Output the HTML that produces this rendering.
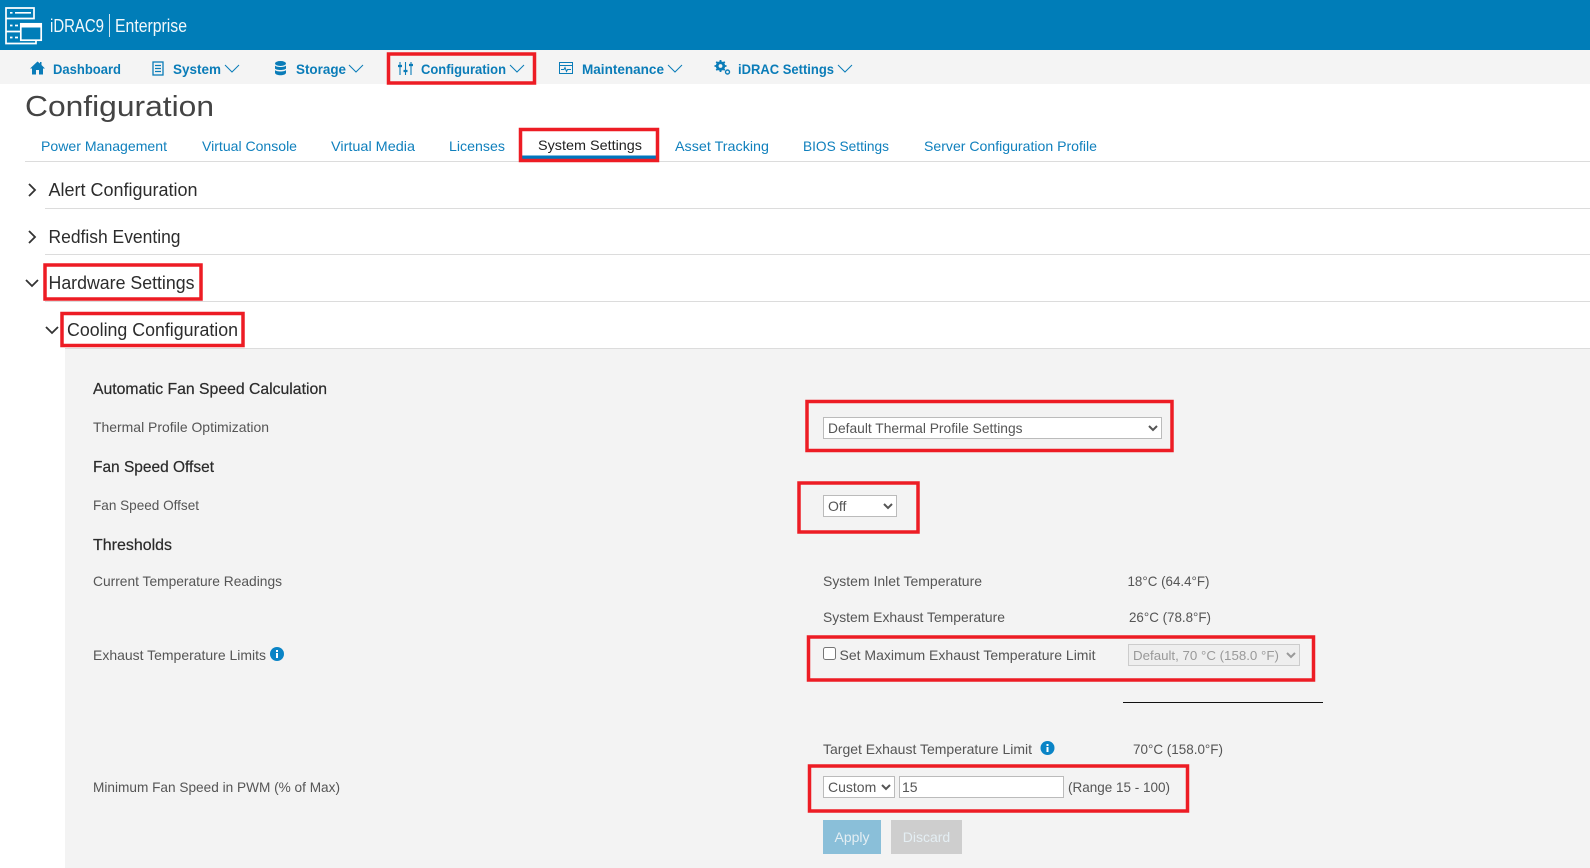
<!DOCTYPE html>
<html lang="en">
<head>
<meta charset="utf-8">
<title>iDRAC9 Enterprise - Configuration</title>
<style>
html,body{margin:0;padding:0;background:#fff;}
body{position:relative;width:1590px;height:868px;overflow:hidden;font-family:"Liberation Sans",sans-serif;}
.abs{position:absolute;box-sizing:border-box;}
#top{left:0;top:0;width:1590px;height:50px;background:#007db8;}
#nav{left:0;top:50px;width:1590px;height:34px;background:#f4f4f4;}
#panel{left:65px;top:349px;width:1525px;height:519px;background:#f3f3f3;}
select,input{position:absolute;box-sizing:border-box;font-family:"Liberation Sans",sans-serif;font-size:14px;color:#555;background:#fff;border:1px solid #bbb;border-radius:0;margin:0;outline:none;}
select{padding:0;}
select:disabled{color:#999;background:#eee;border-color:#ccc;opacity:1;}
input[type=text]{padding:0 2px;}
input[type=checkbox]{width:13px;height:13px;}
button{position:absolute;box-sizing:border-box;border:0;margin:0;padding:0;font-family:"Liberation Sans",sans-serif;font-size:14px;color:#e4eef3;}
svg{position:absolute;left:0;top:0;}
text{font-family:"Liberation Sans",sans-serif;}
.n{font-size:14px;font-weight:700;fill:#0a7cb8;}
.t{font-size:14px;fill:#1080bd;}
.h{font-size:18px;fill:#2c2c2c;}
.s{font-size:16px;fill:#2a2a2a;stroke:#2a2a2a;stroke-width:.2;}
.b{font-size:14px;fill:#555;}
.r{fill:none;stroke:#ed1c24;stroke-width:3.5;}
.c{fill:none;stroke:#0a7cb8;stroke-width:1;}
.a{fill:none;stroke:#333;stroke-width:1.8;}
</style>
</head>
<body>
<div class="abs" id="top"></div>
<div class="abs" id="nav"></div>
<div class="abs" id="panel"></div>

<select style="left:823px;top:417px;width:339px;height:22px;font-size:13.8px;"><option>Default Thermal Profile Settings</option></select>
<select style="left:823px;top:495px;width:74px;height:22px;"><option>Off</option></select>
<input type="checkbox" style="left:823px;top:647px;">
<select disabled style="left:1128px;top:644px;width:172px;height:22px;font-size:13.3px;"><option>Default, 70 °C (158.0 °F)</option></select>
<select style="left:823px;top:776px;width:72px;height:22px;"><option>Custom</option></select>
<input type="text" value="15" style="left:899px;top:776px;width:165px;height:22px;">
<button style="left:823px;top:820px;width:58px;height:34px;background:#8abfd9;">Apply</button>
<button style="left:891px;top:820px;width:71px;height:34px;background:#cecece;">Discard</button>

<svg width="1590" height="868" viewBox="0 0 1590 868" style="pointer-events:none;">
  <!-- logo -->
  <g fill="none" stroke="#fff" stroke-width="1.7">
    <path d="M6 18.500H34V8H6ZM6 19V31.500H20M6 31V43.500H36V40"/>
    <rect x="20.800" y="23.800" width="20.400" height="16.400"/>
    <path d="M10 12.800h2.500M15 12.800H31M10 25.500h2.500M15 25.500h3M10 37.500h2.500M15 37.500h3"/>
  </g>
  <rect x="20" y="23" width="22" height="4.500" fill="#fff"/>
  <text x="50" y="32" font-size="18" fill="#f2f8fb" textLength="54" lengthAdjust="spacingAndGlyphs">iDRAC9</text>
  <rect x="109" y="14" width="1" height="23" fill="#cfe4ef"/>
  <text x="115" y="32" font-size="18" fill="#f2f8fb" textLength="72" lengthAdjust="spacingAndGlyphs">Enterprise</text>

  <!-- nav -->
  <path d="M37.500 61.500 L30 68.500 L32 68.500 V74.500 H36 V70 H39 V74.500 H43 V68.500 H45 L41.500 65 V62 H40 V63.500 Z" fill="#0a7cb8"/>
  <text class="n" x="53" y="74" textLength="68" lengthAdjust="spacingAndGlyphs">Dashboard</text>
  <g fill="none" stroke="#0a7cb8"><rect x="153" y="62" width="10" height="13" stroke-width="1.300"/><path d="M155 65.500h6M155 68.500h6M155 71.500h6" stroke-width="1.300"/></g>
  <text class="n" x="173" y="74" textLength="48" lengthAdjust="spacingAndGlyphs">System</text>
  <path class="c" d="M225 65l7 7 7-7"/>
  <g fill="#0a7cb8"><ellipse cx="280.500" cy="63.500" rx="5.500" ry="2.500"/><path d="M275 65.500c1 2 10 2 11 0v3c-1 2-10 2-11 0z"/><path d="M275 70c1 2 10 2 11 0v3c-1 3-10 3-11 0z"/></g>
  <text class="n" x="296" y="74" textLength="50" lengthAdjust="spacingAndGlyphs">Storage</text>
  <path class="c" d="M349 65l7 7 7-7"/>
  <g stroke="#0a7cb8" stroke-width="1.100" fill="#0a7cb8"><path d="M400 62v13M405.500 62v13M411 62v13"/><path d="M398 66h4M403.500 71h4M409 65h4" stroke-width="2.200"/></g>
  <text class="n" x="421" y="74" textLength="85" lengthAdjust="spacingAndGlyphs">Configuration</text>
  <path class="c" d="M510 65l7 7 7-7"/>
  <g fill="none" stroke="#0a7cb8" stroke-width="1"><rect x="559.500" y="62.500" width="13" height="11"/><path d="M559.500 65.500h13M561 69.500h3l1-2 1.500 4 1-2h3.500"/></g>
  <text class="n" x="582" y="74" textLength="82" lengthAdjust="spacingAndGlyphs">Maintenance</text>
  <path class="c" d="M668 65l7 7 7-7"/>
  <circle cx="720.500" cy="66" r="3.300" fill="none" stroke="#0a7cb8" stroke-width="2.800"/>
  <path d="M720.500 60v2.500M720.500 69.500V72M714.500 66H717M724 66h2.500M716.300 61.800l1.700 1.700M723 68.500l1.700 1.700M716.300 70.200l1.700-1.700M723 63.500l1.700-1.700" stroke="#0a7cb8" stroke-width="1.800"/>
  <circle cx="727.500" cy="72" r="2" fill="none" stroke="#0a7cb8" stroke-width="1.400"/>
  <text class="n" x="738" y="74" textLength="96" lengthAdjust="spacingAndGlyphs">iDRAC Settings</text>
  <path class="c" d="M838 65l7 7 7-7"/>

  <!-- title -->
  <text x="25" y="116" font-size="29" fill="#444" textLength="189" lengthAdjust="spacingAndGlyphs">Configuration</text>

  <!-- tabs -->
  <rect x="25" y="161" width="1565" height="1" fill="#dcdcdc"/>
  <text class="t" x="41" y="151" textLength="126" lengthAdjust="spacingAndGlyphs">Power Management</text>
  <text class="t" x="202" y="151" textLength="95" lengthAdjust="spacingAndGlyphs">Virtual Console</text>
  <text class="t" x="331" y="151" textLength="84" lengthAdjust="spacingAndGlyphs">Virtual Media</text>
  <text class="t" x="449" y="151" textLength="56" lengthAdjust="spacingAndGlyphs">Licenses</text>
  <rect x="522" y="155.500" width="134" height="3.500" fill="#0076bd"/>
  <text x="538" y="150" font-size="14" fill="#222" textLength="104" lengthAdjust="spacingAndGlyphs">System Settings</text>
  <text class="t" x="675" y="151" textLength="94" lengthAdjust="spacingAndGlyphs">Asset Tracking</text>
  <text class="t" x="803" y="151" textLength="86" lengthAdjust="spacingAndGlyphs">BIOS Settings</text>
  <text class="t" x="924" y="151" textLength="173" lengthAdjust="spacingAndGlyphs">Server Configuration Profile</text>

  <!-- accordion -->
  <path class="a" d="M29 184l6 6-6 6"/>
  <text class="h" x="48.500" y="196" textLength="149" lengthAdjust="spacingAndGlyphs">Alert Configuration</text>
  <rect x="45" y="208" width="1545" height="1" fill="#dcdcdc"/>
  <path class="a" d="M29 231l6 6-6 6"/>
  <text class="h" x="48.500" y="243" textLength="132" lengthAdjust="spacingAndGlyphs">Redfish Eventing</text>
  <rect x="45" y="254" width="1545" height="1" fill="#dcdcdc"/>
  <path class="a" d="M26 280l6 6 6-6"/>
  <text class="h" x="48.500" y="289" textLength="146" lengthAdjust="spacingAndGlyphs">Hardware Settings</text>
  <rect x="45" y="301" width="1545" height="1" fill="#dcdcdc"/>
  <path class="a" d="M46 327l6 6 6-6"/>
  <text class="h" x="67" y="336" textLength="171" lengthAdjust="spacingAndGlyphs">Cooling Configuration</text>
  <rect x="65" y="348" width="1525" height="1" fill="#dcdcdc"/>

  <!-- left column -->
  <text class="s" x="93" y="394" textLength="234" lengthAdjust="spacingAndGlyphs">Automatic Fan Speed Calculation</text>
  <text class="b" x="93" y="432" textLength="176" lengthAdjust="spacingAndGlyphs">Thermal Profile Optimization</text>
  <text class="s" x="93" y="472" textLength="121" lengthAdjust="spacingAndGlyphs">Fan Speed Offset</text>
  <text class="b" x="93" y="510" textLength="106" lengthAdjust="spacingAndGlyphs">Fan Speed Offset</text>
  <text class="s" x="93" y="550" textLength="79" lengthAdjust="spacingAndGlyphs">Thresholds</text>
  <text class="b" x="93" y="586" textLength="189" lengthAdjust="spacingAndGlyphs">Current Temperature Readings</text>
  <text class="b" x="93" y="660" textLength="173" lengthAdjust="spacingAndGlyphs">Exhaust Temperature Limits</text>
  <text class="b" x="93" y="792" textLength="247" lengthAdjust="spacingAndGlyphs">Minimum Fan Speed in PWM (% of Max)</text>

  <circle cx="277" cy="654" r="7" fill="#0a84c6"/>
  <rect x="276" y="653" width="2" height="5" fill="#fff"/><rect x="276" y="650" width="2" height="2" fill="#fff"/>
  <circle cx="1047.500" cy="748" r="7" fill="#0a84c6"/>
  <rect x="1046.500" y="747" width="2" height="5" fill="#fff"/><rect x="1046.500" y="744" width="2" height="2" fill="#fff"/>

  <!-- right column -->
  <text class="b" x="823" y="586" textLength="159" lengthAdjust="spacingAndGlyphs">System Inlet Temperature</text>
  <text class="b" x="1127.500" y="586" textLength="82" lengthAdjust="spacingAndGlyphs">18°C (64.4°F)</text>
  <text class="b" x="823" y="622" textLength="182" lengthAdjust="spacingAndGlyphs">System Exhaust Temperature</text>
  <text class="b" x="1129" y="622" textLength="82" lengthAdjust="spacingAndGlyphs">26°C (78.8°F)</text>
  <text class="b" x="839.500" y="660" textLength="256" lengthAdjust="spacingAndGlyphs">Set Maximum Exhaust Temperature Limit</text>
  <rect x="1123" y="702" width="200" height="1" fill="#111"/>
  <text class="b" x="823" y="754" textLength="209" lengthAdjust="spacingAndGlyphs">Target Exhaust Temperature Limit</text>
  <text class="b" x="1133" y="754" textLength="90" lengthAdjust="spacingAndGlyphs">70°C (158.0°F)</text>
  <text class="b" x="1068" y="792" textLength="102" lengthAdjust="spacingAndGlyphs">(Range 15 - 100)</text>

  <!-- annotation boxes -->
  <rect class="r" x="388.500" y="54" width="146" height="29"/>
  <rect class="r" x="520.500" y="129.500" width="137" height="31"/>
  <rect class="r" x="45" y="265" width="156" height="34"/>
  <rect class="r" x="62" y="313.500" width="181" height="32"/>
  <rect class="r" x="807" y="401.500" width="365" height="49"/>
  <rect class="r" x="799" y="483" width="119" height="49"/>
  <rect class="r" x="808.500" y="637" width="505" height="43"/>
  <rect class="r" x="809.500" y="766" width="378" height="45"/>
</svg>
</body>
</html>
